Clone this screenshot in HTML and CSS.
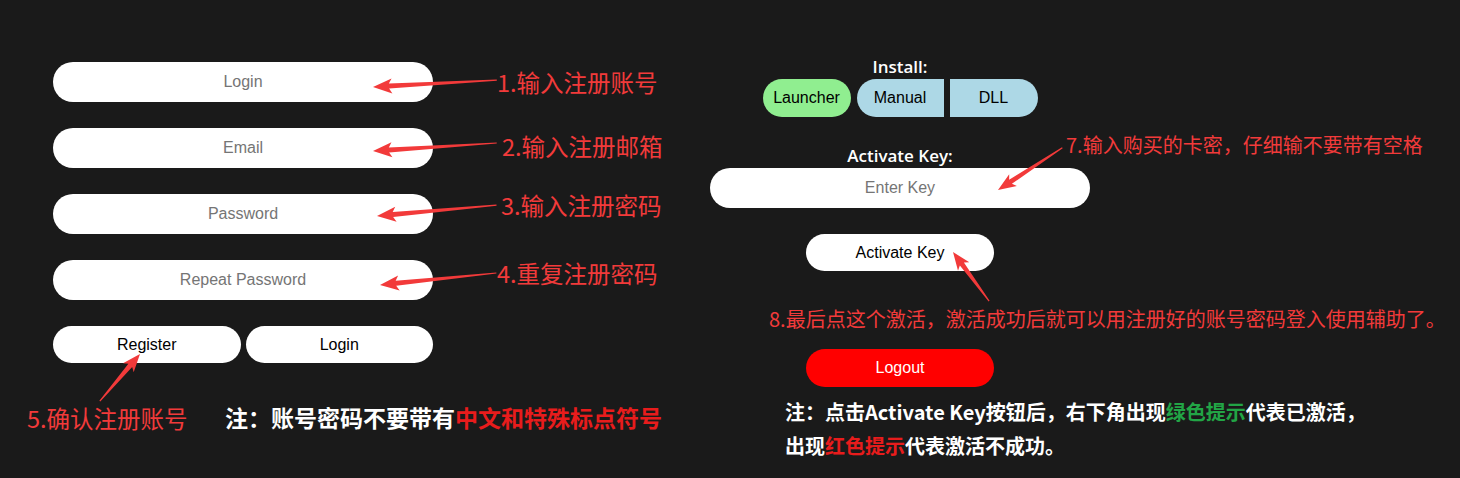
FILE: index.html
```html
<!DOCTYPE html>
<html lang="zh-CN">
<head>
  <meta charset="UTF-8">
  <meta name="viewport" content="width=device-width, initial-scale=1.0">
  <title>Register &amp; Activate</title>
  <link rel="stylesheet" href="styles.css">
</head>
<body>
  <main class="page">
    <section class="register">
      <input class="field" type="text" placeholder="Login">
      <input class="field" type="email" placeholder="Email">
      <input class="field" type="password" placeholder="Password">
      <input class="field" type="password" placeholder="Repeat Password">
      <div class="btn-row">
        <button class="btn">Register</button>
        <button class="btn">Login</button>
      </div>
    </section>

    <section class="activate">
      <div class="label">Install:</div>
      <div class="install-group">
        <button class="pill launcher">Launcher</button>
        <button class="pill manual">Manual</button>
        <button class="pill dll">DLL</button>
      </div>

      <div class="label key-label">Activate Key:</div>
      <input class="field" type="text" placeholder="Enter Key">

      <button class="btn small activate-btn">Activate Key</button>
      <button class="btn small logout-btn">Logout</button>
    </section>
  </main>

  <!-- annotation layer drawn over the screenshot -->
  <svg class="arrows" width="1460" height="478" viewBox="0 0 1460 478">
    <g fill="#f23a3a">
      <polygon transform="translate(373,87) rotate(-3.2)" points="0,0 19,-7.5 16,-2.5 124,-0.6 124,0.6 16,2.5 19,7.5"/>
      <polygon transform="translate(373,151) rotate(-3.7)" points="0,0 19,-7.5 16,-2.5 124,-0.6 124,0.6 16,2.5 19,7.5"/>
      <polygon transform="translate(377,216) rotate(-5.2)" points="0,0 19,-7.5 16,-2.5 120,-0.6 120,0.6 16,2.5 19,7.5"/>
      <polygon transform="translate(380,285) rotate(-5.9)" points="0,0 19,-7.5 16,-2.5 117,-0.6 117,0.6 16,2.5 19,7.5"/>
      <polygon transform="translate(140,354) rotate(130.4)" points="0,0 18,-7 15,-2.5 62,-0.6 62,0.6 15,2.5 18,7"/>
      <polygon transform="translate(998,190) rotate(-33.3)" points="0,0 18,-7 15,-2.5 77,-0.6 77,0.6 15,2.5 18,7"/>
      <polygon transform="translate(953,252) rotate(53.7)" points="0,0 18,-7 15,-2.5 61,-0.6 61,0.6 15,2.5 18,7"/>
    </g>
  </svg>

  <div class="tip t1">1.输入注册账号</div>
  <div class="tip t2">2.输入注册邮箱</div>
  <div class="tip t3">3.输入注册密码</div>
  <div class="tip t4">4.重复注册密码</div>
  <div class="tip t5">5.确认注册账号</div>
  <div class="tip small-tip t7">7.输入购买的卡密，仔细输不要带有空格</div>
  <div class="tip small-tip t8">8.最后点这个激活，激活成功后就可以用注册好的账号密码登入使用辅助了。</div>

  <div class="note n1">注：账号密码不要带有<span class="red">中文和特殊标点符号</span></div>
  <div class="note n2">
    注：点击Activate Key按钮后，右下角出现<span class="green">绿色提示</span>代表已激活，<br>
    出现<span class="red">红色提示</span>代表激活不成功。
  </div>
</body>
</html>
```

FILE: styles.css
```css
:root {
  --bg: #1a1a1a;
  --tip-red: #f23a3a;
  --note-red: #e81c1c;
  --note-green: #22a546;
  --cjk: "Noto Sans CJK SC", "Noto Sans", sans-serif;
}

* {
  box-sizing: border-box;
}

html, body {
  margin: 0;
  width: 1460px;
  height: 478px;
  overflow: hidden;
}

body {
  position: relative;
  background: var(--bg);
  font-family: "Liberation Sans", Arial, sans-serif;
}

.page {
  display: flex;
  align-items: flex-start;
}

/* left column */
.register {
  display: flex;
  flex-direction: column;
  gap: 26px;
  width: 380px;
  margin: 62px 0 0 53px;
}

.field {
  display: block;
  width: 380px;
  height: 40px;
  border: none;
  border-radius: 20px;
  background: #fff;
  font-family: "Liberation Sans", Arial, sans-serif;
  font-size: 16px;
  text-align: center;
  color: #000;
  outline: none;
}

.field::placeholder {
  color: #757575;
}

.btn-row {
  display: flex;
  gap: 5px;
}

.btn {
  width: 188px;
  height: 37px;
  border: none;
  border-radius: 19px;
  background: #fff;
  color: #000;
  font-family: "Liberation Sans", Arial, sans-serif;
  font-size: 16px;
  padding: 0;
}

/* right column */
.activate {
  display: flex;
  flex-direction: column;
  align-items: center;
  width: 380px;
  margin: 55px 0 0 277px;
}

.label {
  color: #fff;
  font-family: "Open Sans", "Noto Sans", sans-serif;
  font-size: 17px;
  font-weight: 600;
  line-height: 24px;
}

.install-group {
  display: flex;
  gap: 6px;
  margin-top: 0;
}

.pill {
  height: 38px;
  border: none;
  padding: 0;
  color: #000;
  font-family: "Liberation Sans", Arial, sans-serif;
  font-size: 16px;
}

.launcher {
  width: 88px;
  border-radius: 19px;
  background: #90ee90;
}

.manual {
  width: 87px;
  border-radius: 19px 0 0 19px;
  background: #add8e6;
}

.dll {
  width: 88px;
  border-radius: 0 19px 19px 0;
  background: #add8e6;
}

.key-label {
  margin-top: 27px;
}

.activate-btn {
  margin-top: 26px;
}

.logout-btn {
  margin-top: 78px;
  height: 38px;
  background: #ff0000;
  color: #fff;
}

/* annotations */
.arrows {
  position: absolute;
  left: 0;
  top: 0;
  pointer-events: none;
}

.tip {
  position: absolute;
  color: var(--tip-red);
  font-family: var(--cjk);
  font-size: 23.5px;
  line-height: 30px;
  white-space: nowrap;
}

.small-tip {
  font-size: 20px;
}

.t1 { left: 497px; top: 67px; }
.t2 { left: 502px; top: 131px; }
.t3 { left: 501px; top: 190px; }
.t4 { left: 497px; top: 258px; }
.t5 { left: 27px; top: 403px; }
.t7 { left: 1066px; top: 130px; }
.t8 { left: 769px; top: 304px; }

.note {
  position: absolute;
  color: #fff;
  font-family: var(--cjk);
  font-weight: 700;
  white-space: nowrap;
}

.n1 {
  left: 225px;
  top: 402px;
  font-size: 23px;
  line-height: 30px;
}

.n2 {
  left: 785px;
  top: 395px;
  font-size: 20px;
  line-height: 34px;
}

.red {
  color: var(--note-red);
}

.green {
  color: var(--note-green);
}
```
